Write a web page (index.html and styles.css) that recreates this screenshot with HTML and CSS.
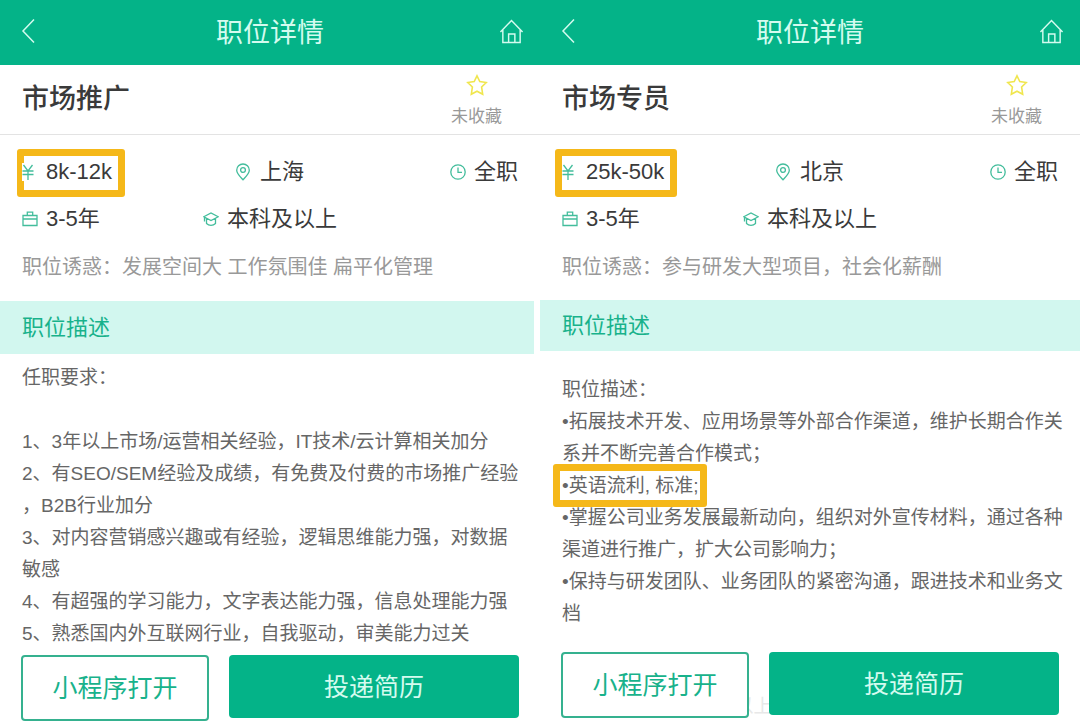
FILE: index.html
```html
<!DOCTYPE html>
<html lang="zh-CN">
<head>
<meta charset="utf-8">
<title>职位详情</title>
<meta name="viewport" content="width=device-width, initial-scale=1">
<link rel="stylesheet" href="styles.css">
</head>
<body>
<svg class="sprite" aria-hidden="true">
  <symbol id="back" viewBox="0 0 14 26"><path d="M13 1.500L2 13L13 24.500"/></symbol>
  <symbol id="home" viewBox="0 0 26 26"><path d="M1.500 13.500L13 1.500L24.500 13.500M4 11.500V24.500H22V11.500M10 24.500V15.500H16.500V24.500"/></symbol>
  <symbol id="star" viewBox="0 0 22 22"><path d="M11 1.800L13.800 7.600L20.200 8.500L15.600 13L16.700 20.200L11 17.200L5.300 20.200L6.400 13L1.800 8.500L8.200 7.600Z"/></symbol>
  <symbol id="yen" viewBox="0 0 16 18"><path d="M1.500 2L6 8L10.500 2M6 8V17M.500 8H11.500M.500 11.500H11.500"/></symbol>
  <symbol id="pin" viewBox="0 0 16 18"><path d="M7 16.800C4.500 14 .700 10.500 .700 7.200A6.300 6.200 0 0 1 13.300 7.200C13.300 10.500 9.500 14 7 16.800Z"/><circle cx="7" cy="7" r="2.400"/></symbol>
  <symbol id="clock" viewBox="0 0 16 16"><circle cx="8" cy="8" r="7.200"/><path d="M8 3.500V8.300H12"/></symbol>
  <symbol id="case" viewBox="0 0 16 16"><path d="M1 4.500H15V14.500H1ZM5.300 4.500V1.200H10.700V4.500M1 8H15M7 8H9"/></symbol>
  <symbol id="cap" viewBox="0 0 16 16"><path d="M.800 5.800L8 2L15.200 5.800L8 9.500ZM3.500 7.500V12.500C6 15 10 15 12.500 12.500V7.500M1.500 6.500V10.500"/></symbol>
</svg>

<main class="board">
  <article class="panel">
    <header class="bar">
      <button class="icon-button" aria-label="返回"><svg class="back"><use href="#back"/></svg></button>
      <h1>职位详情</h1>
      <button class="icon-button" aria-label="首页"><svg class="home"><use href="#home"/></svg></button>
    </header>
    <div class="job-head">
      <h2>市场推广</h2>
      <button class="favorite"><svg class="star"><use href="#star"/></svg>未收藏</button>
    </div>
    <section class="summary">
      <ul class="facts">
        <li class="marked"><svg class="icon money"><use href="#yen"/></svg>8k-12k</li>
        <li><svg class="icon"><use href="#pin"/></svg>上海</li>
        <li><svg class="icon"><use href="#clock"/></svg>全职</li>
        <li><svg class="icon"><use href="#case"/></svg>3-5年</li>
        <li><svg class="icon"><use href="#cap"/></svg>本科及以上</li>
      </ul>
      <p class="perks">职位诱惑：发展空间大 工作氛围佳 扁平化管理</p>
    </section>
    <h3 class="inset">职位描述</h3>
    <section class="detail">
      <p>任职要求：</p>
      <p class="gap">1、3年以上市场/运营相关经验，IT技术/云计算相关加分</p>
      <p>2、有SEO/SEM经验及成绩，有免费及付费的市场推广经验<br>，B2B行业加分</p>
      <p>3、对内容营销感兴趣或有经验，逻辑思维能力强，对数据<br>敏感</p>
      <p>4、有超强的学习能力，文字表达能力强，信息处理能力强</p>
      <p>5、熟悉国内外互联网行业，自我驱动，审美能力过关</p>
    </section>
    <footer class="actions">
      <button class="open">小程序打开</button>
      <button class="apply">投递简历</button>
    </footer>
  </article>

  <article class="panel second">
    <header class="bar">
      <button class="icon-button" aria-label="返回"><svg class="back"><use href="#back"/></svg></button>
      <h1>职位详情</h1>
      <button class="icon-button" aria-label="首页"><svg class="home"><use href="#home"/></svg></button>
    </header>
    <div class="job-head">
      <h2>市场专员</h2>
      <button class="favorite"><svg class="star"><use href="#star"/></svg>未收藏</button>
    </div>
    <section class="summary">
      <ul class="facts">
        <li class="marked"><svg class="icon money"><use href="#yen"/></svg>25k-50k</li>
        <li><svg class="icon"><use href="#pin"/></svg>北京</li>
        <li><svg class="icon"><use href="#clock"/></svg>全职</li>
        <li><svg class="icon"><use href="#case"/></svg>3-5年</li>
        <li><svg class="icon"><use href="#cap"/></svg>本科及以上</li>
      </ul>
      <p class="perks">职位诱惑：参与研发大型项目，社会化薪酬</p>
    </section>
    <h3>职位描述</h3>
    <section class="detail">
      <p>职位描述：</p>
      <p>•拓展技术开发、应用场景等外部合作渠道，维护长期合作关<br>系并不断完善合作模式；</p>
      <p><span class="marked phrase">•英语流利, 标准;</span></p>
      <p>•掌握公司业务发展最新动向，组织对外宣传材料，通过各种<br>渠道进行推广，扩大公司影响力；</p>
      <p>•保持与研发团队、业务团队的紧密沟通，跟进技术和业务文<br>档</p>
    </section>
    <footer class="actions">
      <span class="ghost">以上</span>
      <button class="open">小程序打开</button>
      <button class="apply">投递简历</button>
    </footer>
  </article>
</main>
</body>
</html>
```
FILE: styles.css
```css
* {
  box-sizing: border-box;
}

body,
h1,
h2,
h3,
p,
ul {
  margin: 0;
  padding: 0;
}

body {
  background: #fff;
  color: #3a3a3a;
  font-family: "Liberation Sans", "Noto Sans CJK SC", sans-serif;
}

button {
  border: 0;
  background: none;
  padding: 0;
  font-family: inherit;
}

svg {
  display: block;
  fill: none;
  stroke: currentColor;
}

.sprite {
  display: none;
}

.board {
  display: grid;
  grid-template-columns: 1fr 1fr;
  min-height: 100vh;
  overflow: hidden;
}

.panel {
  display: flex;
  flex-direction: column;
  min-width: 0;
}

.bar {
  display: flex;
  align-items: center;
  justify-content: space-between;
  height: 65px;
  padding: 0 16px 3px 21px;
  background: #04b388;
  color: #d4fbef;
}

.bar h1 {
  padding-top: 3px;
  font-size: 27px;
  font-weight: 400;
  line-height: 40px;
}

.icon-button {
  display: flex;
  min-width: 20px;
  color: inherit;
  stroke-width: 1.5;
}

.back {
  width: 14px;
  height: 26px;
}

.home {
  width: 25px;
  height: 25px;
}

.job-head {
  display: flex;
  align-items: center;
  justify-content: space-between;
  height: 70px;
  padding: 0 38px 0 22px;
  border-bottom: 1px solid #e3e3e3;
}

.job-head h2 {
  padding-bottom: 2px;
  font-size: 27px;
  font-weight: 500;
  line-height: 40px;
}

.favorite {
  display: flex;
  flex-direction: column;
  align-items: center;
  gap: 9px;
  padding-top: 4px;
  color: #999;
  font-size: 17px;
  line-height: 24px;
}

.star {
  width: 22px;
  height: 22px;
  color: #f0e64e;
  stroke-width: 1.6;
}

.summary {
  padding: 21px 22px 18px;
}

.facts {
  display: grid;
  grid-template-columns: 1fr auto 1fr;
  row-gap: 15px;
  list-style: none;
  font-size: 22px;
  line-height: 32px;
}

.facts li {
  display: flex;
  align-items: center;
  justify-self: center;
  gap: 8px;
}

.facts li:nth-child(3n + 1) {
  justify-self: start;
}

.facts li:nth-child(3n) {
  justify-self: end;
}

.icon {
  width: 16px;
  height: 18px;
  color: #43bd9c;
  stroke-width: 1.3;
}

.marked {
  position: relative;
}

.marked::before {
  content: "";
  position: absolute;
  inset: -7px -13px -9px -5px;
  border: 7px solid #f5b819;
  border-radius: 3px;
}

.second .facts .marked::before {
  left: -7px;
}

.money {
  position: relative;
  background: #fff;
}

.marked.phrase::before {
  inset: -11px -8px -11px -9px;
}

.perks {
  margin-top: 17px;
  color: #999;
  font-size: 20px;
  line-height: 30px;
}

h3 {
  padding: 10px 22px;
  background: #d2f7ef;
  color: #18b28b;
  font-size: 22px;
  font-weight: 400;
  line-height: 31px;
}

.inset {
  margin: 1px 6px 0 0;
  line-height: 33px;
}

.detail {
  padding: 8px 10px 4px 22px;
  color: #666;
  font-size: 19px;
  line-height: 32px;
}

.second .detail {
  padding-top: 23px;
}

.gap {
  margin-top: 32px;
}

.actions {
  position: relative;
  display: flex;
  gap: 20px;
  margin-top: auto;
  padding: 0 21px;
}

.second .actions {
  padding-bottom: 3px;
}

.open,
.apply {
  position: relative;
  border-radius: 4px;
  font-size: 25px;
  line-height: 36px;
}

.open {
  flex: 184;
  height: 66px;
  border: 2px solid #35b18f;
  background: #fff;
  color: #18b28b;
}

.apply {
  flex: 290;
  height: 63px;
  background: #04b388;
  color: #d4fbef;
}

.ghost {
  position: absolute;
  left: 36%;
  bottom: 3px;
  color: #e8e8e8;
  font-size: 19px;
}
```
